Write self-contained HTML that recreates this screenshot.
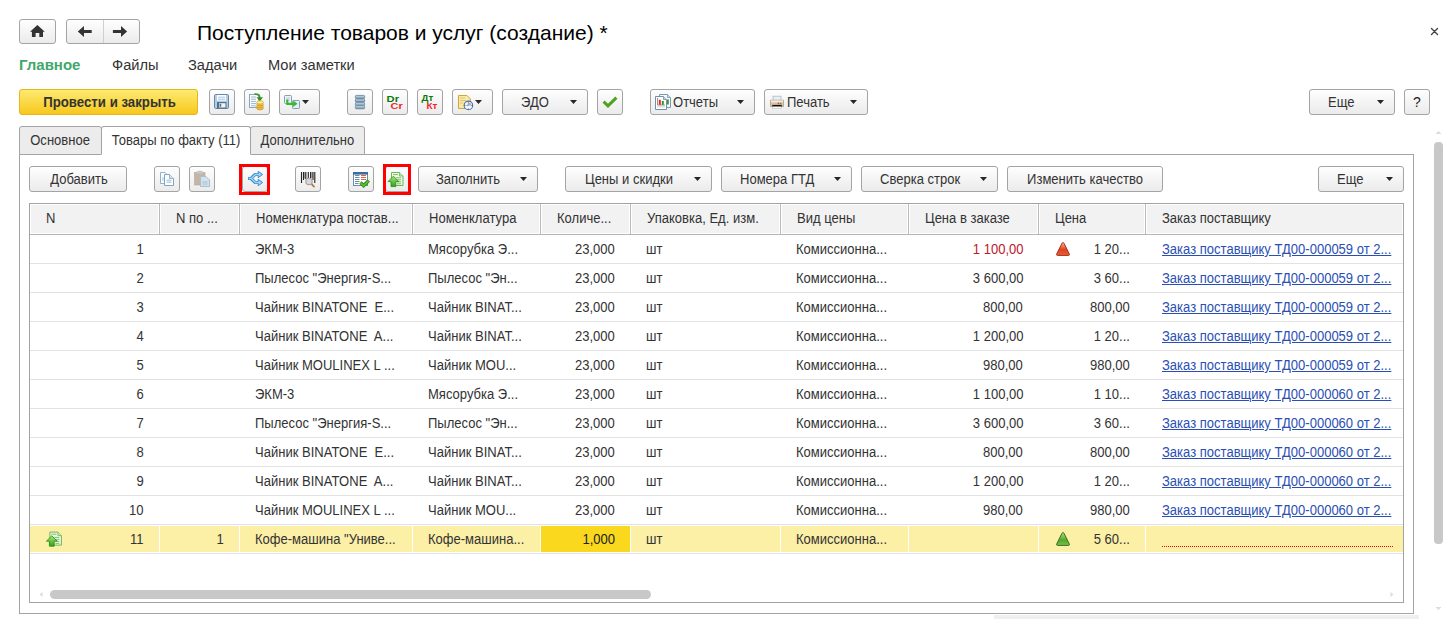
<!DOCTYPE html>
<html><head><meta charset="utf-8">
<style>
*{box-sizing:border-box}
html,body{margin:0;padding:0}
body{width:1456px;height:628px;overflow:hidden;background:#fff;position:relative;font-family:"Liberation Sans",sans-serif;font-size:13px;color:#333}
.a{position:absolute}
.b{position:absolute;border:1px solid #a4a4a4;border-radius:3px;background:linear-gradient(#fefefe,#ebebeb);height:26px;top:89px}
.t2 .b{top:166px}
.bt{position:absolute;white-space:nowrap;line-height:24px;top:0;font-size:14px;transform:scaleX(.93);transform-origin:0 0}
.bt.c{transform-origin:50% 0}
.dd{position:absolute;width:7px;height:4px;background:#262626;clip-path:polygon(0 0,7px 0,3.5px 4px);top:10px}
.ic{position:absolute;left:-1px;top:-1px}
.nav{position:absolute;top:56px;font-size:14.67px;line-height:18px;color:#333;white-space:nowrap}
.tab{position:absolute;top:126px;height:29px;border:1px solid #a4a4a4;border-radius:3px 3px 0 0;background:#ececec;line-height:27px;text-align:center;white-space:nowrap;color:#333}
.tab span{display:inline-block;font-size:14px;transform:scaleX(.93)}
.hc{position:absolute;top:0;height:30px;border:1px solid #fff;background:#f2f2f2}
.hc span{position:absolute;top:4px;line-height:18px;white-space:nowrap;color:#333;font-size:14px;transform:scaleX(.93);transform-origin:0 0}
.hd{position:absolute;top:0;width:1px;height:30px;background:#bababa}
.hb{position:absolute;top:30px;left:0;width:1373px;height:1px;background:#b4b4b4}
.row{position:absolute;left:0;width:1373px;height:28px}
.row span{position:absolute;top:5px;line-height:18px;white-space:nowrap;color:#333;font-size:14px;transform:scaleX(.93);transform-origin:0 0}
.row span.r{transform-origin:100% 0}
.sep{position:absolute;left:0;width:1373px;height:1px;background:#e2e2e2}
.lk{color:#2a4fb4 !important;text-decoration:underline}
.yc{position:absolute;top:1px;height:26px}
.wd{position:absolute;top:1px;width:1px;height:26px;background:#fff}
.tri{position:absolute;left:0;top:0}
</style></head><body>

<!-- top nav -->
<div class="b" style="left:19px;top:19px;width:37px;height:25px">
 <svg class="ic" width="37" height="25" viewBox="0 0 37 25"><path d="M18.4 6 L25.8 12.8 L24 12.8 L24 18 L20.3 18 L20.3 14 L16.6 14 L16.6 18 L12.9 18 L12.9 12.8 L11 12.8 Z" fill="#333"/></svg>
</div>
<div class="b" style="left:66px;top:19px;width:74px;height:25px">
 <div class="a" style="left:36px;top:0;width:1px;height:23px;background:#cfcfcf"></div>
 <svg class="ic" width="74" height="25" viewBox="0 0 74 25"><path d="M11.8 12.4 L18 6.9 L18 10.9 L25.7 10.9 L25.7 13.9 L18 13.9 L18 17.9 Z" fill="#333"/><path d="M61.1 12.4 L55 6.9 L55 10.9 L46.9 10.9 L46.9 13.9 L55 13.9 L55 17.9 Z" fill="#333"/></svg>
</div>

<div class="a" style="left:197px;top:21px;font-size:21px;line-height:24px;color:#000;white-space:nowrap">Поступление товаров и услуг (создание) *</div>

<svg class="a" style="left:1428px;top:25px" width="13" height="13" viewBox="0 0 13 13"><path d="M3.5 3.5 L9.5 9.5 M9.5 3.5 L3.5 9.5" stroke="#444" stroke-width="1.4" stroke-linecap="round"/></svg>

<div class="nav" style="left:19px;font-weight:bold;font-size:15px;color:#40a86a">Главное</div>
<div class="nav" style="left:112px">Файлы</div>
<div class="nav" style="left:188px">Задачи</div>
<div class="nav" style="left:268px">Мои заметки</div>

<!-- command bar -->
<div class="b" style="left:19px;width:179px;border-color:#ecb41c;background:linear-gradient(#fdea70,#f7c81c)">
 <div class="bt c" style="left:1px;width:177px;text-align:center;font-weight:bold;font-size:14px;transform:scaleX(.945)">Провести и закрыть</div>
</div>
<div class="b" style="left:209px;width:26px"></div>
<div class="b" style="left:244px;width:26px"></div>
<div class="b" style="left:279px;width:41px"></div>
<div class="b" style="left:347px;width:26px"></div>
<div class="b" style="left:382px;width:26px"></div>
<div class="b" style="left:417px;width:26px"></div>
<div class="b" style="left:452px;width:41px"></div>
<div class="b" style="left:502px;width:86px"><div class="bt" style="left:18px">ЭДО</div><div class="dd" style="left:67px"></div></div>
<div class="b" style="left:597px;width:26px"></div>
<div class="b" style="left:650px;width:105px"><div class="bt" style="left:22px">Отчеты</div><div class="dd" style="left:86px"></div></div>
<div class="b" style="left:764px;width:104px"><div class="bt" style="left:22px">Печать</div><div class="dd" style="left:85px"></div></div>
<div class="b" style="left:1309px;width:86px"><div class="bt" style="left:18px">Еще</div><div class="dd" style="left:67px"></div></div>
<div class="b" style="left:1404px;width:26px"><div class="bt c" style="left:0;width:24px;text-align:center;font-size:14px;color:#222;transform:none">?</div></div>

<!-- tabs -->
<div class="a" style="left:19px;top:154px;width:1395px;height:460px;border:1px solid #a4a4a4"></div>
<div class="tab" style="left:19px;width:83px"><span>Основное</span></div>
<div class="tab" style="left:250px;width:115px"><span>Дополнительно</span></div>
<div class="tab" style="left:101px;width:150px;background:#fff;border-bottom-color:#fff"><span>Товары по факту (11)</span></div>

<!-- inner toolbar -->
<div class="t2">
<div class="b" style="left:29px;width:98px"><div class="bt c" style="left:1px;width:96px;text-align:center">Добавить</div></div>
<div class="b" style="left:154px;width:26px"></div>
<div class="b" style="left:189px;width:26px"></div>
<div class="b" style="left:242px;width:26px"></div>
<div class="b" style="left:295px;width:26px"></div>
<div class="b" style="left:348px;width:26px"></div>
<div class="b" style="left:385px;width:26px"></div>
<div class="b" style="left:418px;width:120px"><div class="bt" style="left:17px">Заполнить</div><div class="dd" style="left:101px"></div></div>
<div class="b" style="left:565px;width:147px"><div class="bt" style="left:19px">Цены и скидки</div><div class="dd" style="left:128px"></div></div>
<div class="b" style="left:721px;width:131px"><div class="bt" style="left:18px">Номера ГТД</div><div class="dd" style="left:112px"></div></div>
<div class="b" style="left:861px;width:137px"><div class="bt" style="left:18px">Сверка строк</div><div class="dd" style="left:118px"></div></div>
<div class="b" style="left:1007px;width:156px"><div class="bt c" style="left:0;width:154px;text-align:center">Изменить качество</div></div>
<div class="b" style="left:1318px;width:86px"><div class="bt" style="left:18px">Еще</div><div class="dd" style="left:67px"></div></div>
</div>
<div class="a" style="left:239px;top:164px;width:31px;height:31px;border:3px solid #f00"></div>
<div class="a" style="left:383px;top:164px;width:28px;height:31px;border:3px solid #f00"></div>

<!-- TABLE -->
<div id="tbl" class="a" style="left:29px;top:203px;width:1375px;height:400px;border:1px solid #a3a3a3;overflow:hidden">
<!--TBL-->
<div class="hc" style="left:0px;width:129px"><span style="left:15px">N</span></div>
<div class="hc" style="left:130px;width:79px"><span style="left:15px">N по ...</span></div>
<div class="hc" style="left:210px;width:172px"><span style="left:15px">Номенклатура постав...</span></div>
<div class="hc" style="left:383px;width:127px"><span style="left:15px">Номенклатура</span></div>
<div class="hc" style="left:511px;width:89px"><span style="left:15px">Количе...</span></div>
<div class="hc" style="left:601px;width:149px"><span style="left:15px">Упаковка, Ед. изм.</span></div>
<div class="hc" style="left:751px;width:127px"><span style="left:15px">Вид цены</span></div>
<div class="hc" style="left:879px;width:129px"><span style="left:15px">Цена в заказе</span></div>
<div class="hc" style="left:1009px;width:106px"><span style="left:15px">Цена</span></div>
<div class="hc" style="left:1116px;width:257px"><span style="left:15px">Заказ поставщику</span></div>
<div class="hd" style="left:129px"></div>
<div class="hd" style="left:209px"></div>
<div class="hd" style="left:382px"></div>
<div class="hd" style="left:510px"></div>
<div class="hd" style="left:600px"></div>
<div class="hd" style="left:750px"></div>
<div class="hd" style="left:878px"></div>
<div class="hd" style="left:1008px"></div>
<div class="hd" style="left:1115px"></div>
<div class="hb"></div>
<div class="row" style="top:31px"><span class="r" style="right:1259px">1</span><span class="l" style="left:225px">ЭКМ-3</span><span class="l" style="left:398px">Мясорубка Э...</span><span class="r" style="right:788px">23,000</span><span class="l" style="left:616px">шт</span><span class="l" style="left:766px">Комиссионна...</span><span class="r" style="right:380px;color:#c0182a">1 100,00</span><div class="a" style="left:1025px;top:6px"><svg class="tri" width="16" height="16" viewBox="0 0 16 16"><defs><linearGradient id="gr" x1="0" y1="0" x2="0" y2="1"><stop offset="0" stop-color="#f7b4a0"/><stop offset=".55" stop-color="#e2421c"/><stop offset="1" stop-color="#e8603c"/></linearGradient></defs><path d="M8 1.5 Q8.6 1.5 9 2.3 L14.4 13.2 Q14.7 14.3 13.6 14.4 L2.4 14.4 Q1.3 14.3 1.6 13.2 L7 2.3 Q7.4 1.5 8 1.5Z" fill="url(#gr)" stroke="#a8301a" stroke-width="1"/></svg></div><span class="r" style="right:273px">1 20...</span><span class="l lk" style="left:1131px;margin-left:1px">Заказ поставщику ТД00-000059 от 2...</span></div>
<div class="sep" style="top:59px"></div>
<div class="row" style="top:60px"><span class="r" style="right:1259px">2</span><span class="l" style="left:225px">Пылесос "Энергия-S...</span><span class="l" style="left:398px">Пылесос "Эн...</span><span class="r" style="right:788px">23,000</span><span class="l" style="left:616px">шт</span><span class="l" style="left:766px">Комиссионна...</span><span class="r" style="right:380px">3 600,00</span><span class="r" style="right:273px">3 60...</span><span class="l lk" style="left:1131px;margin-left:1px">Заказ поставщику ТД00-000059 от 2...</span></div>
<div class="sep" style="top:88px"></div>
<div class="row" style="top:89px"><span class="r" style="right:1259px">3</span><span class="l" style="left:225px">Чайник BINATONE&nbsp; E...</span><span class="l" style="left:398px">Чайник BINAT...</span><span class="r" style="right:788px">23,000</span><span class="l" style="left:616px">шт</span><span class="l" style="left:766px">Комиссионна...</span><span class="r" style="right:380px">800,00</span><span class="r" style="right:273px">800,00</span><span class="l lk" style="left:1131px;margin-left:1px">Заказ поставщику ТД00-000059 от 2...</span></div>
<div class="sep" style="top:117px"></div>
<div class="row" style="top:118px"><span class="r" style="right:1259px">4</span><span class="l" style="left:225px">Чайник BINATONE&nbsp; A...</span><span class="l" style="left:398px">Чайник BINAT...</span><span class="r" style="right:788px">23,000</span><span class="l" style="left:616px">шт</span><span class="l" style="left:766px">Комиссионна...</span><span class="r" style="right:380px">1 200,00</span><span class="r" style="right:273px">1 20...</span><span class="l lk" style="left:1131px;margin-left:1px">Заказ поставщику ТД00-000059 от 2...</span></div>
<div class="sep" style="top:146px"></div>
<div class="row" style="top:147px"><span class="r" style="right:1259px">5</span><span class="l" style="left:225px">Чайник MOULINEX L ...</span><span class="l" style="left:398px">Чайник MOU...</span><span class="r" style="right:788px">23,000</span><span class="l" style="left:616px">шт</span><span class="l" style="left:766px">Комиссионна...</span><span class="r" style="right:380px">980,00</span><span class="r" style="right:273px">980,00</span><span class="l lk" style="left:1131px;margin-left:1px">Заказ поставщику ТД00-000059 от 2...</span></div>
<div class="sep" style="top:175px"></div>
<div class="row" style="top:176px"><span class="r" style="right:1259px">6</span><span class="l" style="left:225px">ЭКМ-3</span><span class="l" style="left:398px">Мясорубка Э...</span><span class="r" style="right:788px">23,000</span><span class="l" style="left:616px">шт</span><span class="l" style="left:766px">Комиссионна...</span><span class="r" style="right:380px">1 100,00</span><span class="r" style="right:273px">1 10...</span><span class="l lk" style="left:1131px;margin-left:1px">Заказ поставщику ТД00-000060 от 2...</span></div>
<div class="sep" style="top:204px"></div>
<div class="row" style="top:205px"><span class="r" style="right:1259px">7</span><span class="l" style="left:225px">Пылесос "Энергия-S...</span><span class="l" style="left:398px">Пылесос "Эн...</span><span class="r" style="right:788px">23,000</span><span class="l" style="left:616px">шт</span><span class="l" style="left:766px">Комиссионна...</span><span class="r" style="right:380px">3 600,00</span><span class="r" style="right:273px">3 60...</span><span class="l lk" style="left:1131px;margin-left:1px">Заказ поставщику ТД00-000060 от 2...</span></div>
<div class="sep" style="top:233px"></div>
<div class="row" style="top:234px"><span class="r" style="right:1259px">8</span><span class="l" style="left:225px">Чайник BINATONE&nbsp; E...</span><span class="l" style="left:398px">Чайник BINAT...</span><span class="r" style="right:788px">23,000</span><span class="l" style="left:616px">шт</span><span class="l" style="left:766px">Комиссионна...</span><span class="r" style="right:380px">800,00</span><span class="r" style="right:273px">800,00</span><span class="l lk" style="left:1131px;margin-left:1px">Заказ поставщику ТД00-000060 от 2...</span></div>
<div class="sep" style="top:262px"></div>
<div class="row" style="top:263px"><span class="r" style="right:1259px">9</span><span class="l" style="left:225px">Чайник BINATONE&nbsp; A...</span><span class="l" style="left:398px">Чайник BINAT...</span><span class="r" style="right:788px">23,000</span><span class="l" style="left:616px">шт</span><span class="l" style="left:766px">Комиссионна...</span><span class="r" style="right:380px">1 200,00</span><span class="r" style="right:273px">1 20...</span><span class="l lk" style="left:1131px;margin-left:1px">Заказ поставщику ТД00-000060 от 2...</span></div>
<div class="sep" style="top:291px"></div>
<div class="row" style="top:292px"><span class="r" style="right:1259px">10</span><span class="l" style="left:225px">Чайник MOULINEX L ...</span><span class="l" style="left:398px">Чайник MOU...</span><span class="r" style="right:788px">23,000</span><span class="l" style="left:616px">шт</span><span class="l" style="left:766px">Комиссионна...</span><span class="r" style="right:380px">980,00</span><span class="r" style="right:273px">980,00</span><span class="l lk" style="left:1131px;margin-left:1px">Заказ поставщику ТД00-000060 от 2...</span></div>
<div class="sep" style="top:320px"></div>
<div class="row" style="top:321px">
<div class="yc" style="left:0px;width:129px;background:#fcefa6"></div>
<div class="yc" style="left:130px;width:79px;background:#fcefa6"></div>
<div class="yc" style="left:210px;width:172px;background:#fcefa6"></div>
<div class="yc" style="left:383px;width:127px;background:#fcefa6"></div>
<div class="yc" style="left:511px;width:89px;background:#fad81e"></div>
<div class="yc" style="left:601px;width:149px;background:#fcefa6"></div>
<div class="yc" style="left:751px;width:127px;background:#fcefa6"></div>
<div class="yc" style="left:879px;width:129px;background:#fcefa6"></div>
<div class="yc" style="left:1009px;width:106px;background:#fcefa6"></div>
<div class="yc" style="left:1116px;width:257px;background:#fcefa6"></div>
<div class="wd" style="left:129px"></div>
<div class="wd" style="left:209px"></div>
<div class="wd" style="left:382px"></div>
<div class="wd" style="left:510px"></div>
<div class="wd" style="left:600px"></div>
<div class="wd" style="left:750px"></div>
<div class="wd" style="left:878px"></div>
<div class="wd" style="left:1008px"></div>
<div class="wd" style="left:1115px"></div>
<span class="r" style="right:1259px">11</span>
<span class="r" style="right:1179px">1</span>
<span class="l" style="left:225px">Кофе-машина "Униве...</span>
<span class="l" style="left:398px">Кофе-машина...</span>
<span class="r" style="right:788px;color:#222">1,000</span>
<span class="l" style="left:616px">шт</span>
<span class="l" style="left:766px">Комиссионна...</span>
<div class="a" style="left:1025px;top:6px"><svg class="tri" width="16" height="16" viewBox="0 0 16 16"><defs><linearGradient id="gg" x1="0" y1="0" x2="0" y2="1"><stop offset="0" stop-color="#a8e080"/><stop offset=".6" stop-color="#54a82a"/><stop offset="1" stop-color="#7cc04e"/></linearGradient></defs><path d="M8 1.5 Q8.6 1.5 9 2.3 L14.4 13.2 Q14.7 14.3 13.6 14.4 L2.4 14.4 Q1.3 14.3 1.6 13.2 L7 2.3 Q7.4 1.5 8 1.5Z" fill="url(#gg)" stroke="#3a7020" stroke-width="1"/></svg></div>
<span class="r" style="right:273px">5 60...</span>
<div class="a" style="left:1132px;top:21px;width:231px;height:1px;background-image:linear-gradient(90deg,#f00 50%,transparent 50%);background-size:2px 1px"></div>
</div>
<div class="sep" style="top:349px"></div>

<!--/TBL-->
</div>

<!-- page scrollbars -->
<div class="a" style="left:1434px;top:142px;width:9px;height:402px;border-radius:4px;background:#c8c8c8"></div>
<svg class="a" style="left:1435px;top:130px" width="7" height="5"><path d="M0.5 4 L3.5 1 L6.5 4Z" fill="#dcdcdc"/></svg>
<svg class="a" style="left:1435px;top:606px" width="7" height="5"><path d="M0.5 1 L3.5 4 L6.5 1Z" fill="#dcdcdc"/></svg>
<div class="a" style="left:994px;top:615px;width:425px;height:4px;background:#efefef"></div>

<!--ICONS-->
<svg class="a" style="left:0;top:0;pointer-events:none" width="1456" height="628" viewBox="0 0 1456 628">
<defs>
<linearGradient id="gStack" x1="0" y1="0" x2="0" y2="1"><stop offset="0" stop-color="#d6e4ee"/><stop offset="1" stop-color="#6f90aa"/></linearGradient>
<linearGradient id="gUp" x1="0" y1="0" x2="0" y2="1"><stop offset="0" stop-color="#a6e878"/><stop offset="1" stop-color="#30a018"/></linearGradient>
<linearGradient id="gCoin" x1="0" y1="0" x2="0" y2="1"><stop offset="0" stop-color="#fff0a0"/><stop offset="1" stop-color="#e0a820"/></linearGradient>
</defs>
<!-- save floppy -->
<g>
<rect x="214.5" y="94.5" width="14" height="14" rx="1.2" fill="#b3cde3" stroke="#6688a6"/>
<rect x="217" y="95" width="9" height="5.6" fill="#fff"/>
<path d="M218 97.2H225M218 99.2H225" stroke="#a6c4de" stroke-width="1"/>
<rect x="217" y="102" width="9.5" height="6.5" fill="#4f7090"/>
<rect x="219" y="103.2" width="6.5" height="4.3" fill="#f2f2f2"/>
<rect x="219.6" y="103.8" width="1.6" height="3" fill="#4f7090"/>
</g>
<!-- doc + coins + arrow -->
<g>
<rect x="249.5" y="94.5" width="9.5" height="13" fill="#fff" stroke="#86a6c0"/>
<path d="M251 97H256M251 99.2H256M251 101.4H256M251 103.6H256M251 105.8H256" stroke="#9cb6cc"/>
<path d="M254.5 94.2 Q259.5 93.6 259.8 97.8" stroke="#3a9a28" stroke-width="1.8" fill="none"/>
<path d="M256.5 97.2 L263 97.2 L259.8 101.2Z" fill="#2f8c20"/>
<ellipse cx="260" cy="108.2" rx="3.4" ry="1.7" fill="url(#gCoin)" stroke="#c8961a" stroke-width=".7"/>
<ellipse cx="260" cy="106.2" rx="3.4" ry="1.7" fill="url(#gCoin)" stroke="#c8961a" stroke-width=".7"/>
<ellipse cx="260" cy="104.2" rx="3.4" ry="1.7" fill="url(#gCoin)" stroke="#c8961a" stroke-width=".7"/>
<ellipse cx="260" cy="102.4" rx="3.4" ry="1.6" fill="#fff2a8" stroke="#c8961a" stroke-width=".7"/>
</g>
<!-- transfer icon -->
<g>
<rect x="284.5" y="95.5" width="7" height="8" rx=".8" fill="#eef4fa" stroke="#7fa2bc"/>
<path d="M286 98H290M286 100H290" stroke="#a8c0d4" stroke-width=".8"/>
<rect x="292.5" y="100.5" width="7" height="8" rx=".8" fill="#e6eef6" stroke="#7fa2bc"/>
<path d="M287.3 99.5V103.8H294" stroke="#3cb82c" stroke-width="2.2" fill="none"/>
<path d="M293.2 100.6 L297.6 103.8 L293.2 107Z" fill="#3cb82c"/>
<path d="M302 100 L309 100 L305.5 104Z" fill="#2a2a2a"/>
</g>
<!-- stack -->
<g stroke="#5c7d96" stroke-width=".8" fill="url(#gStack)">
<rect x="355.4" y="95.4" width="9.2" height="3.2" rx="1"/>
<rect x="355.4" y="98.9" width="9.2" height="3.2" rx="1"/>
<rect x="355.4" y="102.4" width="9.2" height="3.2" rx="1"/>
<rect x="355.4" y="105.6" width="9.2" height="3.2" rx="1"/>
</g>
<!-- Dr Cr -->
<text x="386.6" y="101.8" font-family="Liberation Sans" font-weight="bold" font-size="9.6" fill="#0a7a0a" textLength="12.4" lengthAdjust="spacingAndGlyphs">Dr</text>
<text x="390.6" y="109" font-family="Liberation Sans" font-weight="bold" font-size="9.6" fill="#f02828" textLength="12.2" lengthAdjust="spacingAndGlyphs">Cr</text>
<!-- Дт Кт -->
<text x="421.6" y="101.2" font-family="Liberation Sans" font-weight="bold" font-size="9.2" fill="#0a7a0a" textLength="11.6" lengthAdjust="spacingAndGlyphs">Дт</text>
<text x="426.4" y="109" font-family="Liberation Sans" font-weight="bold" font-size="9.6" fill="#f02828" textLength="10.8" lengthAdjust="spacingAndGlyphs">Кт</text>
<!-- doc + clock -->
<g>
<path d="M458.5 95.5H467L470.5 99V108.5H458.5Z" fill="#f8eaa8" stroke="#d2a636"/>
<path d="M460 98H465M460 100.5H466M460 103H463" stroke="#e0c060" stroke-width=".9"/>
<circle cx="468.4" cy="105.4" r="4.3" fill="#eef4fb" stroke="#3c78ae" stroke-width="1.1"/>
<path d="M468.4 102.6V105.4H466.6" stroke="#3c78ae" stroke-width=".8" fill="none"/>
<path d="M468.4 102.6A2.8 2.8 0 0 1 471.2 105.4H468.4Z" fill="#9ab4e0"/>
<circle cx="468.4" cy="101.8" r=".6" fill="#e02020"/><circle cx="468.4" cy="109" r=".6" fill="#e02020"/>
<circle cx="464.8" cy="105.4" r=".6" fill="#e02020"/><circle cx="472" cy="105.4" r=".6" fill="#e02020"/>
<path d="M475 100 L482 100 L478.5 104Z" fill="#2a2a2a"/>
</g>
<!-- check -->
<path d="M603.6 101.6 L608 105.8 L616.4 97.6" stroke="#4aa41c" stroke-width="3" fill="none" stroke-linejoin="miter"/>
<!-- reports icon -->
<g>
<path d="M659.5 94.5H667.5L670.5 97.5V107.5H659.5Z" fill="#f4f8fb" stroke="#7b9ab4"/>
<path d="M667.5 94.5V97.5H670.5" fill="#c8d8e6" stroke="#7b9ab4" stroke-width=".8"/>
<rect x="667" y="99.5" width="1.8" height="5" fill="#3a9a30"/>
<path d="M655.5 96.5H663.5L666.5 99.5V109.5H655.5Z" fill="#fff" stroke="#6f90aa"/>
<path d="M663.5 96.5V99.5H666.5" fill="#c8d8e6" stroke="#6f90aa" stroke-width=".8"/>
<path d="M657.5 98V105H665" stroke="#7a6060" stroke-width=".7" fill="none"/>
<rect x="658.8" y="99.8" width="2" height="5" fill="#e8281c"/>
<rect x="661.8" y="101" width="2" height="3.8" fill="#2a9a22"/>
<path d="M657 106.8H665" stroke="#b0c8dc" stroke-width=".8"/>
</g>
<!-- printer -->
<g>
<rect x="773" y="96.2" width="8" height="5" fill="#e8eff6" stroke="#a8bccc" stroke-width=".8"/>
<path d="M770.5 100.2H783.5V106.5H770.5Z" fill="#d8c0a8" stroke="#b89a80" stroke-width=".8"/>
<rect x="771" y="100.4" width="12" height="2" fill="#f2e8dc"/>
<circle cx="778.4" cy="103.4" r=".8" fill="#f03020"/><circle cx="780.6" cy="103.4" r=".8" fill="#30b030"/>
<rect x="772.2" y="104.9" width="9.6" height="1.8" fill="#111"/>
<rect x="772.5" y="106.8" width="9" height="1.4" fill="#fff" stroke="#b0b0b0" stroke-width=".5"/>
</g>
<!-- Еще etc arrows drawn by css -->

<!-- inner toolbar -->
<!-- copy -->
<g>
<path d="M160.5 172.5H165L167 174.5V183.5H160.5Z" fill="#fff" stroke="#8eb2ca"/>
<path d="M164.5 174.5H169.5L173.5 178.5V185.5H164.5Z" fill="#fff" stroke="#7ea6c0"/>
<path d="M169.5 174.5V178.5H173.5" fill="#d6e6f0" stroke="#7ea6c0" stroke-width=".8"/>
<path d="M166.5 180.2H171.5M166.5 182.2H171.5" stroke="#9cbcd2"/>
<path d="M162 178H164M162 180H164" stroke="#a8c4d6"/>
</g>
<!-- paste -->
<g>
<rect x="194.5" y="172.5" width="10.5" height="12.5" fill="#c6b4a4" stroke="#b8a696" stroke-width=".6"/>
<path d="M196.5 172.8 Q196.5 171 199.8 171 Q203 171 203 172.8 L203.6 174 H196Z" fill="#c8c8c8" stroke="#b0b0b0" stroke-width=".5"/>
<path d="M200.5 176.5H206L209.5 180V186.5H200.5Z" fill="#d4e0ea" stroke="#a6c0d2"/>
<path d="M202.5 182H207.5M202.5 184H207.5" stroke="#a6c0d2"/>
</g>
<!-- split arrows -->
<g>
<path d="M248 178.5H251L255 174.5H259 M251 178.5L255 182.5H259" stroke="#3a8ed2" stroke-width="3.2" fill="none"/>
<path d="M258.2 171.3L262.6 174.5L258.2 177.7Z M258.2 179.3L262.6 182.5L258.2 185.7Z" fill="#9fd4f6" stroke="#3a8ed2" stroke-width="1" stroke-linejoin="round"/>
<path d="M248.8 178.5H251.3L255.3 174.5H259.6 M251.3 178.5L255.3 182.5H259.6" stroke="#9fd4f6" stroke-width="1.3" fill="none"/>
</g>
<!-- barcode + magnifier -->
<g>
<path d="M301.5 172V183M303.5 172V180M305.8 172V179M308.3 172V178M310.6 172V178M313 172V180M314.8 172V183" stroke="#222" stroke-width="1.1"/>
<path d="M304.8 172V178.5M312 172V178" stroke="#222" stroke-width=".6"/>
<path d="M311.2 183.6 L314 186.6" stroke="#b07850" stroke-width="1.8" stroke-linecap="round"/>
<circle cx="309" cy="181.4" r="3.2" fill="#c4daf6" stroke="#c09a78" stroke-width="1.1"/>
</g>
<!-- checklist -->
<g>
<rect x="353.5" y="172.5" width="14" height="13" fill="#fff" stroke="#6a8cb0"/>
<rect x="353" y="172" width="15" height="2.6" fill="#3c6c9e"/>
<path d="M355 175.5H359.5M355 177.5H359.5M355 179.5H359.5M355 181.5H359.5M355 183.5H358.5" stroke="#6c88a8" stroke-width="1"/>
<path d="M361 175.5H366M361 177.5H366M361 179.5H366" stroke="#e0604a" stroke-width="1"/>
<path d="M360.4 182.6 L363.6 185.6 L368.8 180.6" stroke="#2e8a18" stroke-width="3.4" fill="none"/>
<path d="M360.4 182.6 L363.6 185.6 L368.8 180.6" stroke="#5cc02e" stroke-width="1.8" fill="none"/>
</g>
<!-- upload -->
<g>
<path d="M391.5 172.5H399.5L403 176V185.5H391.5Z" fill="#eef8e8" stroke="#70b458"/>
<path d="M399.5 172.5V176H403" fill="#c8e8b8" stroke="#70b458" stroke-width=".8"/>
<path d="M393 174.6H398M396 177.8H401M397 179.8H401M397 181.8H401M397 183.8H401" stroke="#80c060" stroke-width="1"/>
<path d="M393.4 176.2 L398.8 181.6 L395.8 181.6 L395.8 186.6 L391 186.6 L391 181.6 L388 181.6 Z" fill="url(#gUp)" stroke="#2a8a18" stroke-width=".8" stroke-linejoin="round"/>
</g>
<!-- row 11 icon -->
<g transform="translate(-341.6 359.6)">
<path d="M391.5 172.5H399.5L403 176V185.5H391.5Z" fill="#eef8e8" stroke="#70b458"/>
<path d="M399.5 172.5V176H403" fill="#c8e8b8" stroke="#70b458" stroke-width=".8"/>
<path d="M393 174.6H398M396 177.8H401M397 179.8H401M397 181.8H401M397 183.8H401" stroke="#80c060" stroke-width="1"/>
<path d="M393.4 176.2 L398.8 181.6 L395.8 181.6 L395.8 186.6 L391 186.6 L391 181.6 L388 181.6 Z" fill="url(#gUp)" stroke="#2a8a18" stroke-width=".8" stroke-linejoin="round"/>
</g>

<!-- table h-scrollbar -->
<rect x="50" y="590" width="601" height="9" rx="4.5" fill="#c8c8c8"/>
<path d="M42.5 592 L39.5 594.5 L42.5 597Z" fill="#dcdcdc"/>
<path d="M1390.5 592 L1393.5 594.5 L1390.5 597Z" fill="#dcdcdc"/>
</svg>

<!--/ICONS-->
</body></html>
